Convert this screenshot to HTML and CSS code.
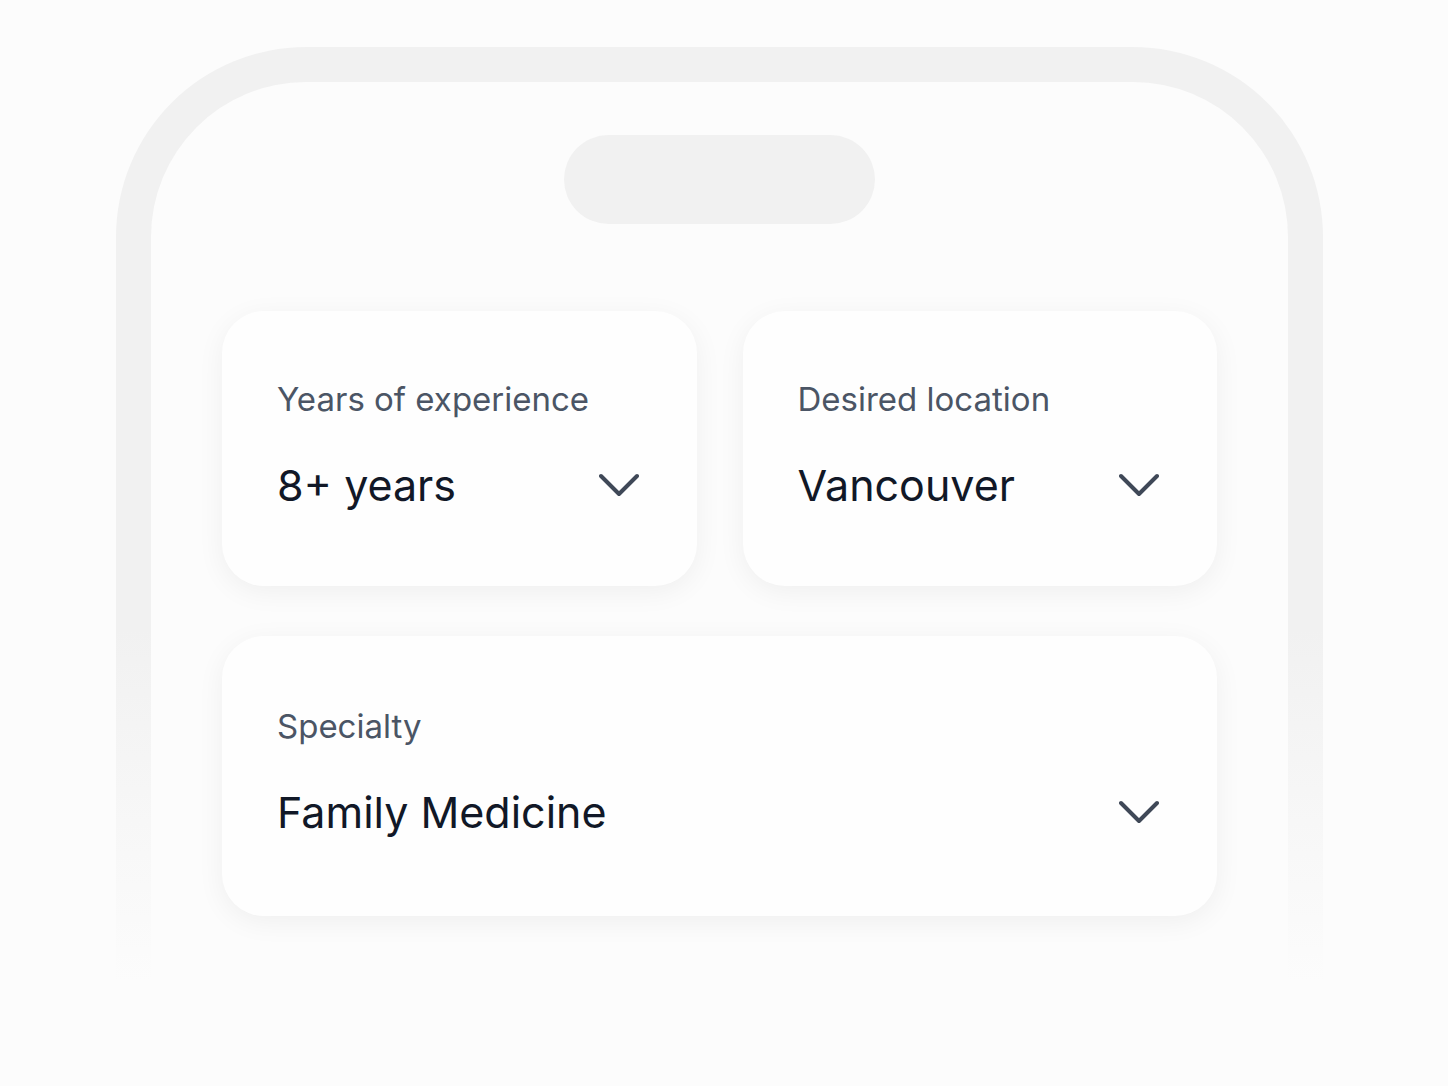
FILE: index.html
```html
<!DOCTYPE html>
<html lang="en">
<head>
    <meta charset="UTF-8">
    <meta name="viewport" content="width=device-width, initial-scale=1.0">
    <title>Job preferences</title>
    <link rel="stylesheet" href="styles.css">
</head>
<body>
    <div class="phone">
        <div class="screen">
            <div class="notch"></div>

            <div class="fields">
                <div class="field">
                    <div class="field-label">Years of experience</div>
                    <div class="field-row">
                        <span class="field-value">8+ years</span>
                        <svg class="chevron" viewBox="0 0 40 24" width="40" height="24"><path d="M2 3 L20 21 L38 3"/></svg>
                    </div>
                </div>

                <div class="field">
                    <div class="field-label">Desired location</div>
                    <div class="field-row">
                        <span class="field-value">Vancouver</span>
                        <svg class="chevron" viewBox="0 0 40 24" width="40" height="24"><path d="M2 3 L20 21 L38 3"/></svg>
                    </div>
                </div>

                <div class="field field-wide">
                    <div class="field-label">Specialty</div>
                    <div class="field-row">
                        <span class="field-value">Family Medicine</span>
                        <svg class="chevron" viewBox="0 0 40 24" width="40" height="24"><path d="M2 3 L20 21 L38 3"/></svg>
                    </div>
                </div>
            </div>
        </div>
    </div>
</body>
</html>
```

FILE: styles.css
```css
body {
    margin: 0;
    background-color: #fcfcfc;
    font-family: Inter, "Noto Sans", sans-serif;
    overflow: hidden;
}

/* phone outline, fades out towards the bottom */
.phone {
    width: 1137px;
    height: 1004px;
    margin: 47px 0 0 116px;
    padding: 35px 35px 0;
    border-radius: 190px 190px 0 0;
    background: linear-gradient(to bottom, #f1f1f1 0%, #f1f1f1 56%, #fcfcfc 90%);
}

.screen {
    height: 100%;
    box-sizing: border-box;
    padding: 53px 71px 0;
    border-radius: 155px 155px 0 0;
    background-color: #fcfcfc;
}

.notch {
    width: 311px;
    height: 89px;
    margin: 0 auto 87px;
    border-radius: 45px;
    background-color: #f1f1f1;
}

.fields {
    display: grid;
    grid-template-columns: 1fr 1fr;
    column-gap: 46px;
    row-gap: 50px;
}

.field {
    padding: 68px 58px 75px 55px;
    border-radius: 42px;
    background-color: #fefefe;
    box-shadow: 0 6px 28px rgba(0, 0, 0, 0.055);
}

.field-wide {
    grid-column: 1 / 3;
    padding-top: 70px;
    padding-bottom: 78px;
}

.field-label {
    font-size: 33px;
    line-height: 40px;
    color: #4b5565;
}

.field-row {
    display: flex;
    align-items: center;
    justify-content: space-between;
    margin-top: 40px;
}

.field-value {
    font-size: 43px;
    line-height: 52px;
    color: #111827;
}

.chevron {
    fill: none;
    stroke: #3f4857;
    stroke-width: 4;
    stroke-linecap: round;
    stroke-linejoin: round;
}
```
